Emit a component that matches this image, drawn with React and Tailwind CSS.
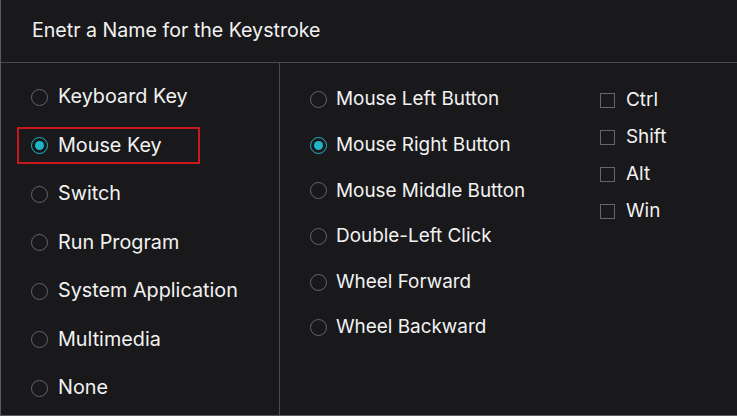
import React from "react";

const leftOptions = [
    "Keyboard Key",
    "Mouse Key",
    "Switch",
    "Run Program",
    "System Application",
    "Multimedia",
    "None",
];

const mouseOptions = [
    "Mouse Left Button",
    "Mouse Right Button",
    "Mouse Middle Button",
    "Double-Left Click",
    "Wheel Forward",
    "Wheel Backward",
];

const modifiers = ["Ctrl", "Shift", "Alt", "Win"];

function Radio({ checked }) {
    return (
        <span
            className={`w-[17px] h-[17px] rounded-full border shrink-0 flex items-center justify-center ${
                checked ? "border-[#1fb6c9] border-[1.5px]" : "border-[#66666a]"
            }`}
        >
            {checked && <span className="w-[9px] h-[9px] rounded-full bg-[#1fb6c9]" />}
        </span>
    );
}

export default function App() {
    return (
        <div
            className="w-[737px] h-[416px] bg-[#19191b] text-[#f2f2f2] flex flex-col border-l border-b border-[#5a5a5c] overflow-hidden"
            style={{ fontFamily: "Inter, 'Noto Sans', sans-serif" }}
        >
            <div className="h-[63px] shrink-0 flex items-center pl-[31px] border-b border-[#4a4a4c] text-[19.6px] whitespace-nowrap">
                Enetr a Name for the Keystroke
            </div>

            <div className="flex flex-1 min-h-0">
                <div className="w-[279px] shrink-0 border-r border-[#4a4a4c] pt-[10px]">
                    {leftOptions.map((label) => {
                        const active = label === "Mouse Key";
                        return (
                            <div key={label} className="h-[48.5px] flex items-center">
                                <div
                                    className={`ml-[16px] w-[183px] h-[37px] flex items-center gap-[10px] pl-[12px] border-2 whitespace-nowrap ${
                                        active ? "border-[#c8181e]" : "border-transparent"
                                    }`}
                                >
                                    <Radio checked={active} />
                                    <span className="text-[19.8px] leading-none">{label}</span>
                                </div>
                            </div>
                        );
                    })}
                </div>

                <div className="flex-1 flex pt-[14px]">
                    <div className="w-[320px] pl-[30px]">
                        {mouseOptions.map((label) => (
                            <div key={label} className="h-[45.6px] flex items-center gap-[9px] whitespace-nowrap">
                                <Radio checked={label === "Mouse Right Button"} />
                                <span className="text-[18.9px] leading-none">{label}</span>
                            </div>
                        ))}
                    </div>
                    <div className="pt-[4.5px]">
                        {modifiers.map((label) => (
                            <div key={label} className="h-[37px] flex items-center gap-[11px]">
                                <span className="w-[15px] h-[15px] border border-[#66666a] shrink-0" />
                                <span className="text-[18.9px] leading-none">{label}</span>
                            </div>
                        ))}
                    </div>
                </div>
            </div>
        </div>
    );
}
